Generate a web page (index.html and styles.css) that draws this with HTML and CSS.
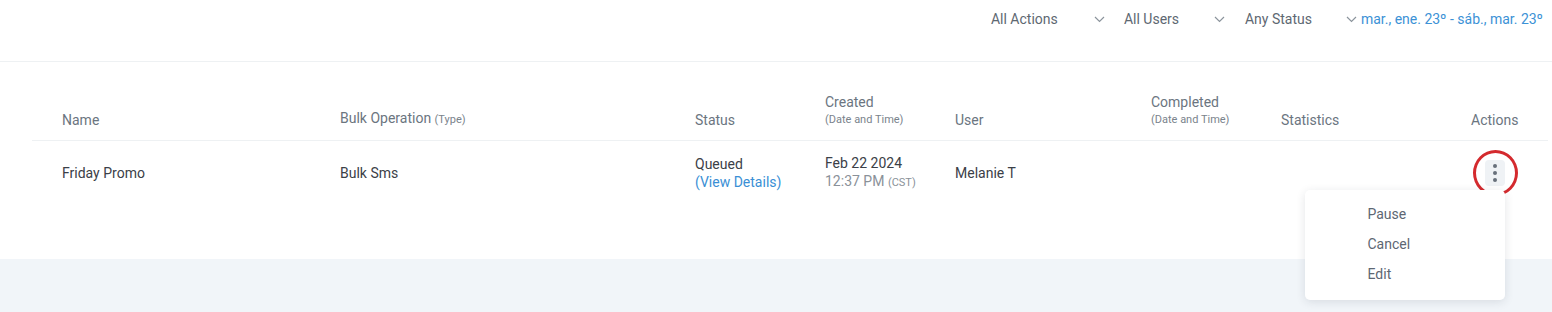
FILE: index.html
```html
<!DOCTYPE html>
<html lang="en">
<head>
    <meta charset="UTF-8">
    <meta name="viewport" content="width=device-width, initial-scale=1.0">
    <title>Bulk Operations</title>

    <link rel="stylesheet" href="styles.css">

</head>
<body>
<div class="topbar">
    <div class="filters">
        <div class="filter filter-actions">
            <span>All Actions</span>
            <svg class="chevron" width="11" height="7" viewBox="0 0 11 7"><path d="M1 1l4.5 4.5L10 1" fill="none" stroke="#8b949c" stroke-width="1.2"/></svg>
        </div>
        <div class="filter filter-users">
            <span>All Users</span>
            <svg class="chevron" width="11" height="7" viewBox="0 0 11 7"><path d="M1 1l4.5 4.5L10 1" fill="none" stroke="#8b949c" stroke-width="1.2"/></svg>
        </div>
        <div class="filter filter-status">
            <span>Any Status</span>
            <svg class="chevron" width="11" height="7" viewBox="0 0 11 7"><path d="M1 1l4.5 4.5L10 1" fill="none" stroke="#8b949c" stroke-width="1.2"/></svg>
        </div>
        <div class="filter filter-date">
            <span>mar., ene. 23º - sáb., mar. 23º</span>
        </div>
    </div>
</div>

<div class="list">
    <div class="row head-row">
        <div class="cell">Name</div>
        <div class="cell">Bulk Operation <small>(Type)</small></div>
        <div class="cell">Status</div>
        <div class="cell">Created<br><small>(Date and Time)</small></div>
        <div class="cell">User</div>
        <div class="cell">Completed<br><small>(Date and Time)</small></div>
        <div class="cell">Statistics</div>
        <div class="cell cell-actions">Actions</div>
    </div>

    <div class="row body-row">
        <div class="cell">Friday Promo</div>
        <div class="cell">Bulk Sms</div>
        <div class="cell">Queued<br><a href="#" class="link">(View Details)</a></div>
        <div class="cell">Feb 22 2024<br><span class="time">12:37 PM <small>(CST)</small></span></div>
        <div class="cell">Melanie T</div>
        <div class="cell"></div>
        <div class="cell"></div>
        <div class="cell cell-actions">
            <div class="kebab-wrap">
                <button class="kebab">
                    <span class="dot"></span>
                    <span class="dot"></span>
                    <span class="dot"></span>
                </button>
                <span class="highlight"></span>
                <ul class="menu">
                    <li>Pause</li>
                    <li>Cancel</li>
                    <li>Edit</li>
                </ul>
            </div>
        </div>
    </div>
</div>

<div class="footer-band"></div>
</body>
</html>
```

FILE: styles.css
```css
body, html {
    margin: 0;
    font-family: Roboto, "Liberation Sans", sans-serif;
    font-size: 14px;
    color: #3b4047;
    background: #fff;
}

/* top filter bar */
.topbar {
    height: 61px;
    border-bottom: 1px solid #eef1f3;
    display: flex;
    justify-content: flex-end;
    padding-right: 9px;
}

.filters {
    display: flex;
    align-items: center;
    height: 18px;
    margin-top: 10px;
}

.filter {
    display: flex;
    align-items: center;
    justify-content: space-between;
    color: #5e6872;
    line-height: 18px;
}

.filter-actions { width: 114px; margin-right: 19px; }
.filter-users { width: 101px; margin-right: 20px; }
.filter-status { width: 112px; margin-right: 4px; }
.filter-date { color: #3c92d6; }

.chevron {
    display: block;
    margin-top: 1px;
}

/* list */
.list {
    margin: 0 4px 0 32px;
}

.row {
    display: grid;
    grid-template-columns: 278px 355px 130px 130px 196px 130px 1fr auto;
    padding: 0 30px;
}

.cell {
    line-height: 18px;
}

.cell small {
    font-size: 11px;
}

.head-row {
    height: 79px;
    box-sizing: border-box;
    align-items: end;
    padding-bottom: 12px;
    border-bottom: 1px solid #eef1f3;
    color: #6b7580;
}

.head-row .cell {
    line-height: 16px;
}

.head-row small {
    color: #7a838c;
}

.body-row {
    height: 60px;
    padding-top: 2px;
    align-items: center;
}

.link {
    color: #3a8fd5;
    text-decoration: none;
}

.time {
    color: #8a9199;
}

.time small {
    font-size: 11px;
}

.cell-actions {
    width: 47px;
    text-align: center;
}

.kebab-wrap {
    position: relative;
    width: 20px;
    height: 26px;
    margin: 0 auto;
}

.kebab {
    width: 20px;
    height: 26px;
    padding: 0;
    border: none;
    border-radius: 4px;
    background: #eff2f5;
    display: flex;
    flex-direction: column;
    align-items: center;
    justify-content: center;
    gap: 3px;
    cursor: pointer;
}

.dot {
    width: 4px;
    height: 4px;
    border-radius: 50%;
    background: #67707a;
}

.highlight {
    position: absolute;
    left: -12px;
    top: -10px;
    width: 45px;
    height: 46px;
    box-sizing: border-box;
    border: 3.5px solid #d42a2e;
    border-radius: 50%;
}

.menu {
    position: absolute;
    right: 0;
    top: 30px;
    width: 200px;
    margin: 0;
    padding: 9px 0 11px 63px;
    box-sizing: border-box;
    list-style: none;
    background: #fff;
    border-radius: 5px;
    box-shadow: 0 2px 10px rgba(30, 45, 60, 0.12);
    text-align: left;
    z-index: 2;
}

.menu li {
    line-height: 30px;
    color: #5d6773;
}

.footer-band {
    margin-top: 56px;
    height: 60px;
    background: #f1f5f9;
}
```
